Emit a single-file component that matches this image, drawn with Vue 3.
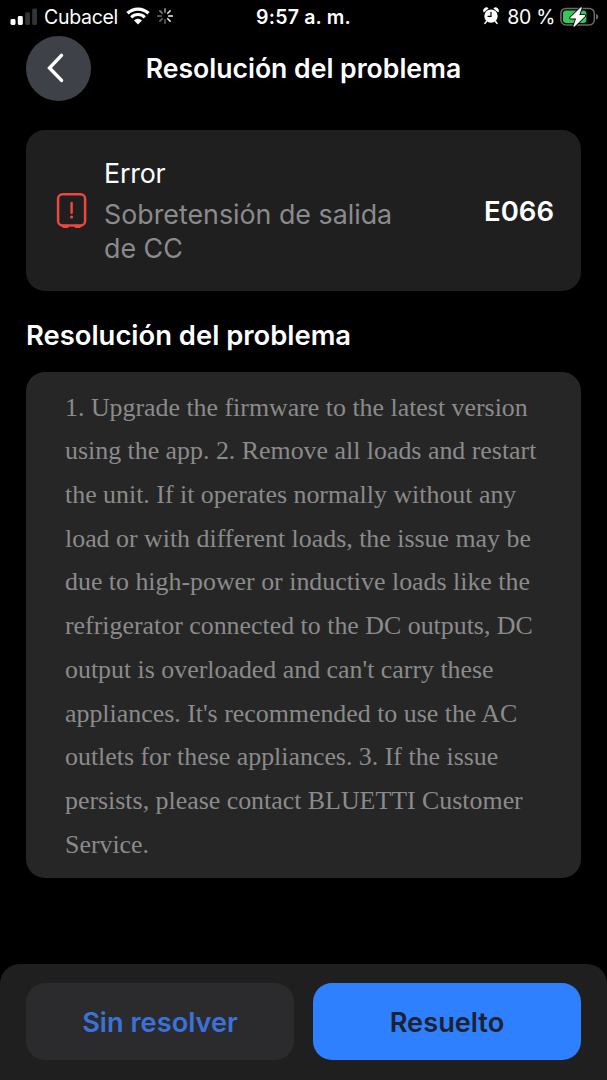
<template>
  <div class="screen">
    <div class="status-bar">
      <div class="status-left">
        <svg class="signal" width="28" height="18" viewBox="0 0 28 18">
          <rect x="0.5" y="11" width="5" height="6" rx="1.4" fill="#fff" />
          <rect x="7.8" y="8" width="5" height="9" rx="1.4" fill="#fff" />
          <rect x="15.2" y="4.2" width="4.8" height="12.8" rx="1.4" fill="#333335" />
          <rect x="22.2" y="0.5" width="4.8" height="16.5" rx="1.4" fill="#333335" />
        </svg>
        <span class="carrier">Cubacel</span>
        <svg class="wifi" width="24" height="18" viewBox="0 0 24 18" fill="none">
          <path d="M1.5 6.3a15.2 15.2 0 0 1 21 0" stroke="#fff" stroke-width="3.4" />
          <path d="M5.2 10.3a9.8 9.8 0 0 1 13.6 0" stroke="#fff" stroke-width="3" />
          <path d="M12 17.6 8 13.5a5.7 5.7 0 0 1 8 0Z" fill="#fff" />
        </svg>
        <svg class="spinner" width="18" height="18" viewBox="-9 -9 18 18">
          <line
            v-for="(color, i) in spokes"
            :key="i"
            x1="0"
            y1="-3.9"
            x2="0"
            y2="-7.2"
            :stroke="color"
            stroke-width="1.7"
            stroke-linecap="round"
            :transform="`rotate(${i * 45})`"
          />
        </svg>
      </div>
      <span class="clock">9:57 a. m.</span>
      <div class="status-right">
        <svg class="alarm" width="16" height="18" viewBox="0 0 16 18">
          <path d="M0.8 5.4A3.1 3.1 0 0 1 5.6 1.5Z" fill="#fff" />
          <path d="M15.2 5.4A3.1 3.1 0 0 0 10.4 1.5Z" fill="#fff" />
          <path d="M3.6 14.2 2 16.4M12.4 14.2 14 16.4" stroke="#fff" stroke-width="1.6" stroke-linecap="round" />
          <circle cx="8" cy="9.1" r="6.7" fill="#fff" />
          <path d="M8 4.8V9.4H4.6" fill="none" stroke="#000" stroke-width="1.2" />
        </svg>
        <span class="percent">80 %</span>
        <svg class="battery" width="40" height="22" viewBox="0 0 40 22">
          <rect x="0.9" y="2.4" width="33.4" height="16.6" rx="5" fill="none" stroke="#6b6b6d" stroke-width="1.5" />
          <path d="M36 8v5.6c1.4-.4 2.2-1.5 2.2-2.8S37.4 8.4 36 8Z" fill="#6b6b6d" />
          <rect x="3" y="4.5" width="23.4" height="12.4" rx="3" fill="#35c759" />
          <path d="M21.2 1.8 10.7 12h6.2l-2.9 8.2L24.6 9.7h-6.2Z" fill="#fff" stroke="#000" stroke-width="3" stroke-linejoin="round" />
          <path d="M21.2 1.8 10.7 12h6.2l-2.9 8.2L24.6 9.7h-6.2Z" fill="#fff" stroke="#fff" stroke-width="1.2" stroke-linejoin="round" />
        </svg>
      </div>
    </div>

    <header class="nav">
      <button class="back" type="button" aria-label="Atrás">
        <svg width="64" height="64" viewBox="0 0 64 64" fill="none">
          <path d="M35.5 19.4 23.6 31.9 35.5 44.4" stroke="#fff" stroke-width="3.5" stroke-linecap="round" stroke-linejoin="miter" />
        </svg>
      </button>
      <h1 class="nav-title">{{ title }}</h1>
    </header>

    <main class="content">
      <section class="error-card">
        <svg class="device" width="32" height="38" viewBox="0 0 32 38" fill="none">
          <rect x="2.1" y="2.2" width="27" height="31.2" rx="4.5" stroke="#ef473f" stroke-width="2.5" />
          <path d="M5.4 33.4 7.6 35.200h4l1.600-1.800ZM18 33.400l1.600 1.800h4l2.200-1.800Z" fill="#ef473f" stroke="#ef473f" stroke-width="1.4" stroke-linejoin="round" />
          <path d="M15.6 11v9.800" stroke="#ef473f" stroke-width="2.500" stroke-linecap="round" />
          <circle cx="15.6" cy="25" r="1.600" fill="#ef473f" />
        </svg>
        <div class="error-text">
          <div class="error-label">Error</div>
          <div class="error-name">Sobretensión de salida de CC</div>
        </div>
        <span class="error-code">E066</span>
      </section>

      <h2 class="section-title">{{ title }}</h2>
      <section class="solution">{{ solution }}</section>
    </main>

    <footer class="actions">
      <button class="btn btn-secondary" type="button"><span>Sin resolver</span></button>
      <button class="btn btn-primary" type="button"><span>Resuelto</span></button>
    </footer>
  </div>
</template>

<script setup>
const title = 'Resolución del problema'

const solution =
  '1. Upgrade the firmware to the latest version using the app. ' +
  '2. Remove all loads and restart the unit. If it operates normally without any load or with different loads, ' +
  'the issue may be due to high-power or inductive loads like the refrigerator connected to the DC outputs, ' +
  "DC output is overloaded and can't carry these appliances. It's recommended to use the AC outlets for these appliances. " +
  '3. If the issue persists, please contact BLUETTI Customer Service.'

// Clockwise from the top, one shade per spoke
const spokes = ['#8e8e8e', '#d0d0d0', '#fff', '#dcdcdc', '#5c5c5c', '#666', '#707070', '#7c7c7c']
</script>

<style>
body {
  margin: 0;
  background: #000;
}
</style>

<style scoped>
.screen {
  display: flex;
  flex-direction: column;
  height: 1080px;
  overflow: hidden;
  background: #000;
  color: #fff;
  font-family: Inter, "Liberation Sans", sans-serif;
}

.status-bar {
  display: grid;
  grid-template-columns: 1fr auto 1fr;
  align-items: center;
  height: 34px;
  padding: 0 10px;
  box-sizing: border-box;
  flex: none;
}
.status-left,
.status-right {
  display: flex;
  align-items: center;
  height: 34px;
  white-space: nowrap;
}
.status-right {
  justify-content: flex-end;
}
.signal {
  margin-top: -1px;
}
.carrier {
  margin-left: 6px;
  font-size: 19.5px;
  letter-spacing: -0.3px;
}
.wifi {
  margin: -2px 0 0 8px;
}
.spinner {
  margin: -2px 0 0 6px;
}
.clock {
  font-size: 19.5px;
  font-weight: 600;
  letter-spacing: 0.2px;
}
.alarm {
  margin-top: -2px;
}
.percent {
  margin: 0 5px 0 8px;
  font-size: 19.5px;
  letter-spacing: -0.3px;
}
.battery {
  margin: -1px -3px 0 0;
}

.nav {
  display: grid;
  grid-template-columns: 65px 1fr 65px;
  align-items: center;
  flex: none;
  height: 65px;
  margin-top: 2px;
  padding: 0 26px;
}
.back {
  display: flex;
  align-self: start;
  width: 64.5px;
  height: 64.5px;
  padding: 0;
  border: none;
  border-radius: 50%;
  background: #3f4148;
}
.nav-title {
  margin: -2px 0 0;
  font-size: 26.6px;
  font-weight: 600;
  text-align: center;
  white-space: nowrap;
}

.content {
  flex: 1;
  padding: 29px 26px 0;
}
.error-card {
  display: flex;
  align-items: center;
  height: 161px;
  padding: 0 27px 0 30px;
  box-sizing: border-box;
  border-radius: 19px;
  background: #1f1f1f;
}
.device {
  flex: none;
}
.error-text {
  width: 300px;
  margin-left: 16px;
  font-size: 26.8px;
  line-height: 34px;
}
.error-label {
  margin-bottom: 7px;
  letter-spacing: -0.2px;
}
.error-name {
  color: #8b8b8d;
}
.error-code {
  margin: 0 0 0 auto;
  font-size: 27.5px;
  font-weight: 600;
}
.section-title {
  margin: 27px 0 20px;
  font-size: 27.4px;
  font-weight: 600;
  line-height: 34px;
  white-space: nowrap;
}
.solution {
  height: 506px;
  padding: 13.6px 39px 0;
  box-sizing: border-box;
  border-radius: 19px;
  background: #262626;
  color: #8b8b8b;
  font-family: "Liberation Serif", serif;
  font-size: 25.88px;
  line-height: 43.7px;
}

.actions {
  display: flex;
  gap: 19px;
  flex: none;
  height: 116.5px;
  padding: 19.5px 26px;
  box-sizing: border-box;
  border-radius: 20px 20px 0 0;
  background: #1f1f1f;
}
.btn {
  flex: 1;
  height: 77px;
  padding: 2px 0 0;
  border: none;
  border-radius: 19px;
  font-family: inherit;
  font-size: 27.2px;
  font-weight: 600;
}
.btn-secondary {
  background: #2b2b2d;
  color: #3b72d9;
}
.btn-primary {
  background: #2f80ff;
  color: #1b2230;
}
</style>
